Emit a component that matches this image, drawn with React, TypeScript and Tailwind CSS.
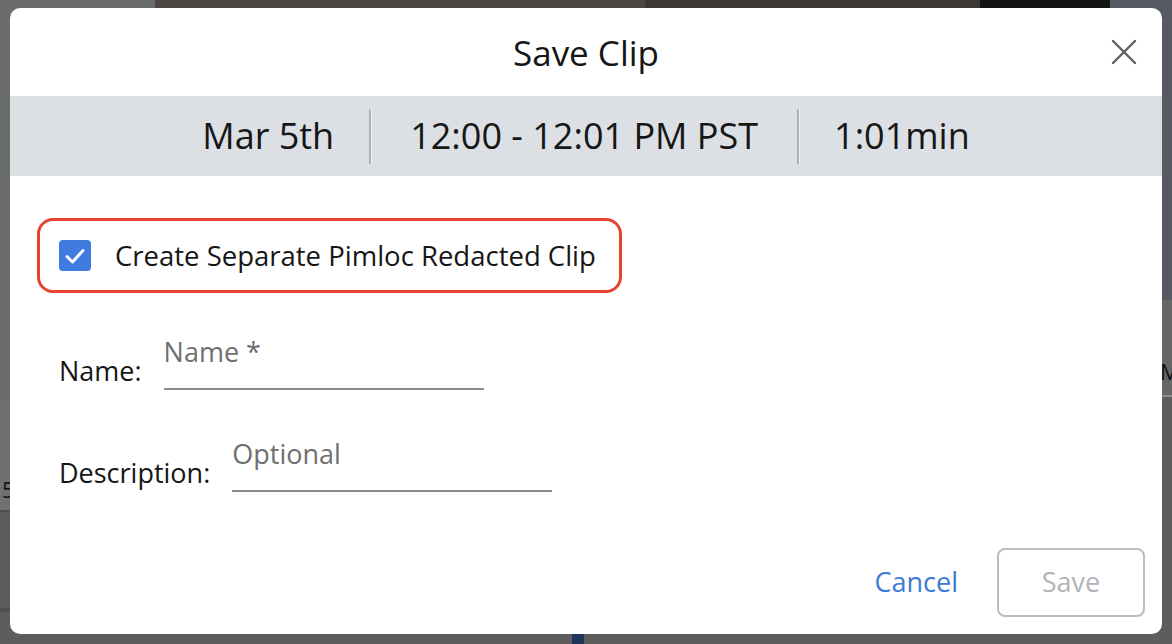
import React, { useState } from 'react';

const Separator = () => <div className="h-[55px] w-[2px] bg-[#aeb1b5] shadow-[1px_0_0_#eef0f2]" />;

const SaveClipDialog: React.FC = () => {
  const [redacted, setRedacted] = useState(true);
  const [name, setName] = useState('');
  const [description, setDescription] = useState('');

  return (
    <div className="flex h-[626px] w-[1152px] flex-col rounded-[10px] bg-white font-['Open_Sans',sans-serif] text-[#161616]">
      {/* Header */}
      <div className="relative flex h-[88px] items-center justify-center">
        <h2 className="text-[35px] leading-none">Save Clip</h2>
        <button className="absolute right-[24px] top-[30px] flex h-[28px] w-[28px] items-center justify-center text-[#5f5f5f]">
          <svg width="26" height="26" viewBox="0 0 26 26" fill="none" stroke="currentColor" strokeWidth="2.4" strokeLinecap="round">
            <path d="M2 2 L24 24 M24 2 L2 24" />
          </svg>
        </button>
      </div>

      {/* Clip summary */}
      <div className="flex h-[80px] items-center justify-center bg-[#dcdfe3] text-[36px] leading-none">
        <span className="px-[35px]">Mar 5th</span>
        <Separator />
        <span className="px-[39px]">12:00 - 12:01 PM PST</span>
        <Separator />
        <span className="px-[35px]">1:01min</span>
      </div>

      {/* Body */}
      <div className="flex flex-1 flex-col px-[27px] pt-[42px]">
        <label className="flex h-[75px] w-[585px] cursor-pointer items-center gap-[24px] rounded-[16px] border-[3px] border-[#e5432d] pl-[19px]">
          <button
            onClick={() => setRedacted(!redacted)}
            className={`flex h-[31px] w-[32px] items-center justify-center rounded-[4px] ${redacted ? 'bg-[#3f7be0]' : 'border-2 border-[#888] bg-white'}`}
          >
            {redacted && (
              <svg width="22" height="18" viewBox="0 0 22 18" fill="none" stroke="white" strokeWidth="3" strokeLinecap="round" strokeLinejoin="round">
                <path d="M3 9.5 L8.5 15 L19 3.5" />
              </svg>
            )}
          </button>
          <span className="text-[27.5px] leading-none">Create Separate Pimloc Redacted Clip</span>
        </label>

        <div className="mt-[41px] flex items-end gap-[22px] pl-[22px]">
          <span className="mb-[6px] text-[27px] leading-none">Name:</span>
          <div className="w-[320px] border-b-2 border-[#8c8c8c] pb-[20px]">
            <input
              value={name}
              onChange={(e) => setName(e.target.value)}
              placeholder="Name *"
              className="h-[34px] w-full bg-transparent text-[27px] leading-none outline-none placeholder:text-[#6f6f6f]"
            />
          </div>
        </div>

        <div className="mt-[46px] flex items-end gap-[22px] pl-[22px]">
          <span className="mb-[6px] text-[27px] leading-none">Description:</span>
          <div className="w-[320px] border-b-2 border-[#8c8c8c] pb-[20px]">
            <input
              value={description}
              onChange={(e) => setDescription(e.target.value)}
              placeholder="Optional"
              className="h-[34px] w-full bg-transparent text-[27px] leading-none outline-none placeholder:text-[#6f6f6f]"
            />
          </div>
        </div>

        <div className="-mr-[10px] mt-auto flex items-center justify-end gap-[39px] pb-[17px]">
          <button className="text-[27px] text-[#3d7ad8]">Cancel</button>
          <button disabled className="h-[69px] w-[148px] rounded-[8px] border-2 border-[#babdc2] text-[27px] text-[#b1b4b9]">
            Save
          </button>
        </div>
      </div>
    </div>
  );
};

export default function App() {
  return (
    <div className="relative h-[644px] w-[1172px] overflow-hidden bg-[#5c5d5c]">
      {/* dimmed page behind the dialog */}
      <div className="absolute left-0 top-0 h-[400px] w-[160px] bg-[#6a6c6c]" />
      <div className="absolute left-[155px] top-0 h-[20px] w-[490px] bg-[#4b4641]" />
      <div className="absolute left-[645px] top-0 h-[20px] w-[335px] bg-[#3c3833]" />
      <div className="absolute left-[980px] top-0 h-[20px] w-[130px] bg-[#141414]" />
      <div className="absolute left-[1110px] top-0 h-[300px] w-[62px] bg-[#565b62]" />
      <div className="absolute left-0 top-[400px] h-[110px] w-[12px] bg-[#6f716f]" />
      <div className="absolute left-0 top-[510px] h-[2px] w-[12px] bg-[#4d4e4d]" />
      <div className="absolute left-0 top-[608px] h-[4px] w-[12px] bg-[#4e4f4e]" />
      <div className="absolute right-0 top-[300px] h-[95px] w-[12px] bg-[#666867]" />
      <div className="absolute right-0 top-[395px] h-[2px] w-[12px] bg-[#8d8e8d]" />
      <div className="absolute left-[572px] top-[630px] h-[14px] w-[12px] rounded-t-[3px] bg-[#1d3559]" />
      <div className="absolute left-[2px] top-[478px] font-['Open_Sans',sans-serif] text-[22px] leading-none text-[#111]">5</div>
      <div className="absolute left-[1160px] top-[360px] font-['Open_Sans',sans-serif] text-[22px] leading-none text-[#111]">M</div>

      <div className="relative pl-[10px] pt-[8px]">
        <SaveClipDialog />
      </div>
    </div>
  );
}
